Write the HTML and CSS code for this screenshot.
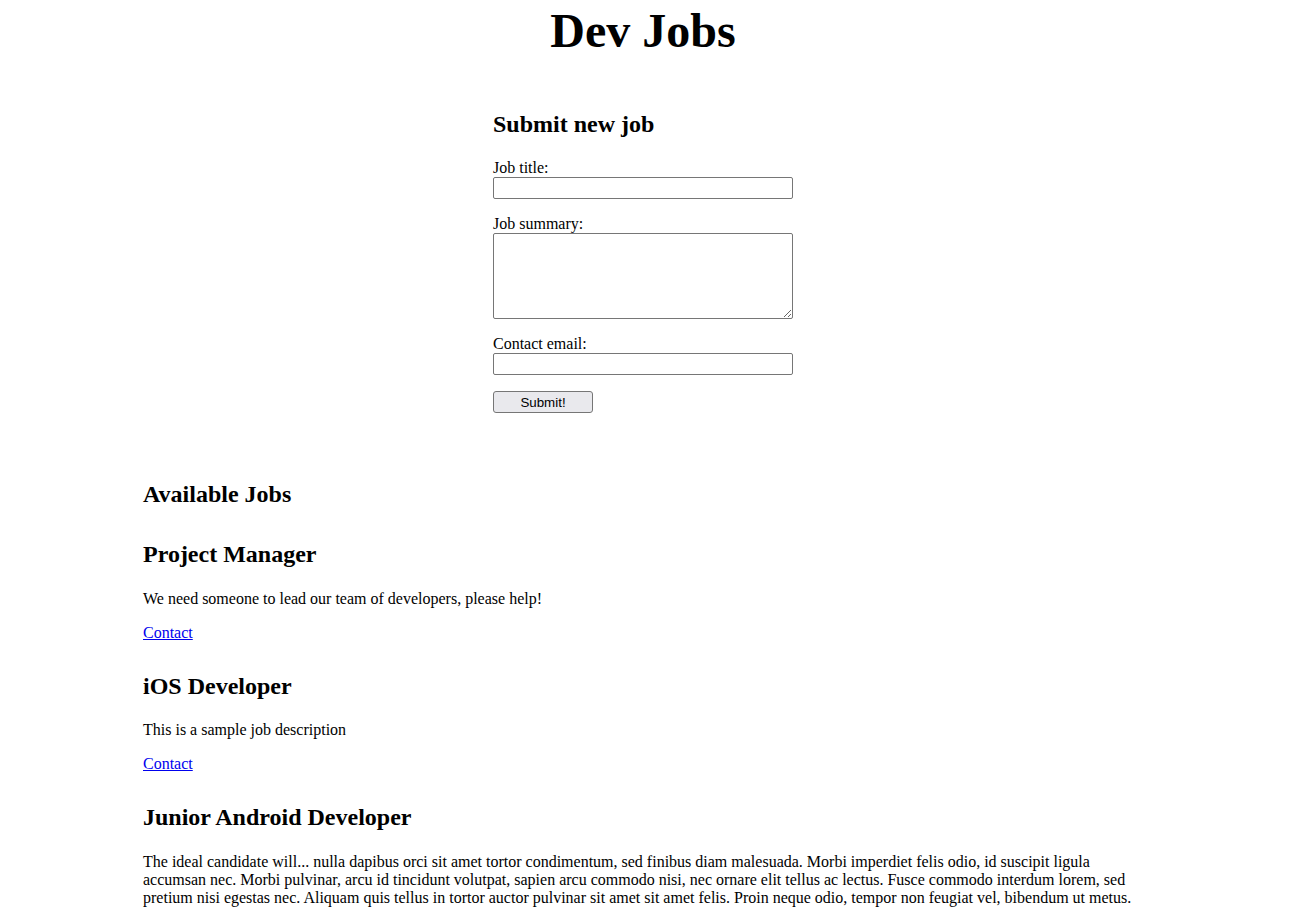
FILE: index.html
```html
<!DOCTYPE html>
<html lang="en">
<head>
<meta charset="utf-8">
<title>Dev Jobs</title>
<link rel="stylesheet" href="styles.css">
</head>
<body>
<h1 class="page-title">Dev Jobs</h1>

<section class="submit-job">
  <h2 class="section-title">Submit new job</h2>
  <form class="job-form" onsubmit="return false;">
    <div class="field">
      <label class="field-label" for="title">Job title:</label>
      <input class="field-input" id="title" type="text">
    </div>
    <div class="field">
      <label class="field-label" for="summary">Job summary:</label>
      <textarea class="field-textarea" id="summary"></textarea>
    </div>
    <div class="field">
      <label class="field-label" for="email">Contact email:</label>
      <input class="field-input" id="email" type="email">
    </div>
    <div class="field">
      <button class="submit-btn" type="submit">Submit!</button>
    </div>
  </form>
</section>

<section class="jobs">
  <h2 class="section-title">Available Jobs</h2>

  <article class="job">
    <h2 class="job-title">Project Manager</h2>
    <p class="job-desc">We need someone to lead our team of developers, please help!</p>
    <p class="job-contact"><a href="#">Contact</a></p>
  </article>

  <article class="job">
    <h2 class="job-title">iOS Developer</h2>
    <p class="job-desc">This is a sample job description</p>
    <p class="job-contact"><a href="#">Contact</a></p>
  </article>

  <article class="job">
    <h2 class="job-title">Junior Android Developer</h2>
    <p class="job-desc">The ideal candidate will... nulla dapibus orci sit amet tortor condimentum, sed finibus diam malesuada. Morbi imperdiet felis odio, id suscipit ligula accumsan nec. Morbi pulvinar, arcu id tincidunt volutpat, sapien arcu commodo nisi, nec ornare elit tellus ac lectus. Fusce commodo interdum lorem, sed pretium nisi egestas nec. Aliquam quis tellus in tortor auctor pulvinar sit amet sit amet felis. Proin neque odio, tempor non feugiat vel, bibendum ut metus.</p>
    <p class="job-contact"><a href="#">Contact</a></p>
  </article>
</section>
</body>
</html>
```

FILE: styles.css
```css
html, body {
  background: #ffffff;
}

body {
  margin: 0;
  font-family: "Liberation Serif", "Times New Roman", serif;
  font-size: 16px;
  color: #000000;
}

.page-title {
  margin: 3px 0 0;
  font-size: 48px;
  font-weight: bold;
  text-align: center;
  padding-right: 6px;
}

.section-title,
.job-title {
  font-size: 24px;
  font-weight: bold;
  margin: 19.92px 0;
}

.submit-job {
  width: 306px;
  margin: 53px auto 0;
}

.submit-job .section-title {
  margin-bottom: 21px;
}

.job-form {
  margin: 0;
}

.field {
  margin-top: 16px;
}

.field:first-child {
  margin-top: 0;
}

.field-label {
  display: block;
}

.field-input,
.field-textarea {
  display: block;
  box-sizing: border-box;
  width: 300px;
  margin: 0;
  border: 1px solid #767676;
  border-radius: 2px;
  background: #ffffff;
  font-family: "Liberation Sans", Arial, sans-serif;
  font-size: 13.333px;
  padding: 1px 2px;
}

.field-input {
  height: 22px;
}

.field-textarea {
  height: 86px;
  resize: both;
}

.submit-btn {
  display: block;
  box-sizing: border-box;
  width: 100px;
  height: 22px;
  margin: 0;
  padding: 0;
  border: 1px solid #767676;
  border-radius: 3px;
  background: #e9e9ed;
  color: #000000;
  font-family: "Liberation Sans", Arial, sans-serif;
  font-size: 13.333px;
}

.jobs {
  width: 1006px;
  margin: 68px auto 0;
}

.jobs > .section-title {
  margin-bottom: 33px;
}

.job {
  margin-top: 31px;
}

.job-title {
  margin-bottom: 21.5px;
}

.job-desc,
.job-contact {
  margin: 16px 0;
}

.job-contact a {
  color: #0000ee;
  text-decoration: underline;
}
```
